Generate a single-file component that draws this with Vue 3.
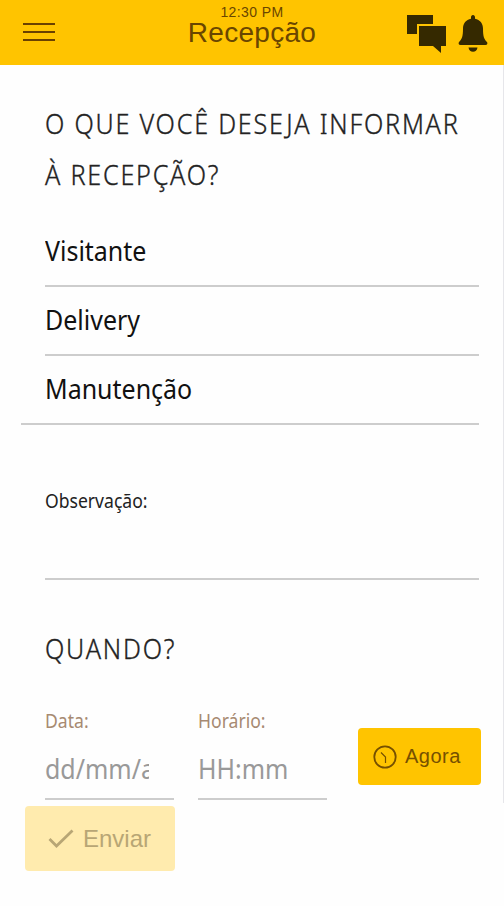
<template>
  <div class="screen">
    <header class="topbar">
      <button class="menu" aria-label="Menu">
        <span></span>
        <span></span>
        <span></span>
      </button>
      <div class="title">
        <span class="clock">12:30 PM</span>
        <h1>Recepção</h1>
      </div>
      <div class="actions">
        <svg class="chat" width="40" height="38" viewBox="0 0 40 38">
          <path d="M0 0h26v9H10v10H0z" />
          <path d="M12 11h27v20h-5v7l-8-7H12z" />
        </svg>
        <svg class="bell" width="30" height="38" viewBox="0 0 30 38">
          <path d="M15 0c1.300 0 2 1 2 2.300v1.500c5 .9 8 4.800 8 9.700 0 8 1 10.500 4 13.500.8 1 .4 3-1.500 3h-25c-1.900 0-2.300-2-1.500-3 3-3 4-5.500 4-13.500 0-4.900 3-8.800 8-9.700V2.300C13 1 13.700 0 15 0z" />
          <path d="M10.500 32.500h9c-.5 3-2.200 4.300-4.500 4.300s-4-1.300-4.500-4.300z" />
        </svg>
      </div>
    </header>

    <main class="content">
      <h2 class="question">
        <span class="fit">O QUE VOCÊ DESEJA INFORMAR</span>
        <span class="fit">À RECEPÇÃO?</span>
      </h2>

      <ul class="options">
        <li v-for="option in options" :key="option" @click="selected = option">
          <span class="fit">{{ option }}</span>
        </li>
      </ul>

      <div class="note">
        <span class="fit">Observação:</span>
      </div>

      <h2 class="when"><span class="fit">QUANDO?</span></h2>

      <div class="schedule">
        <div class="field">
          <label><span class="fit">Data:</span></label>
          <div class="value date"><span class="fit">dd/mm/aaaa</span></div>
        </div>
        <div class="field">
          <label><span class="fit">Horário:</span></label>
          <div class="value"><span class="fit">HH:mm</span></div>
        </div>
        <button class="now">
          <svg width="24" height="24" viewBox="0 0 24 24" fill="none" stroke="currentColor">
            <circle cx="12" cy="12" r="10.700" stroke-width="1.800" />
            <path d="M8 7.500l4.500 4.500v6" stroke-width="1.200" />
          </svg>
          <span>Agora</span>
        </button>
      </div>
    </main>

    <button class="send" :disabled="!selected">
      <svg width="26" height="20" viewBox="0 0 26 20" fill="none" stroke="currentColor">
        <path d="M1.500 10l7 7L24.500 1.500" stroke-width="2.800" />
      </svg>
      <span>Enviar</span>
    </button>
  </div>
</template>

<script setup>
import { ref } from 'vue'

const options = ['Visitante', 'Delivery', 'Manutenção']
const selected = ref('')
</script>

<style>
body {
  margin: 0;
  background: #fefefe;
}
</style>

<style scoped>
.screen {
  width: 504px;
  height: 906px;
  overflow: hidden;
  background: #fefefe;
  font-family: "Noto Sans", "Open Sans", sans-serif;
  color: #111;
}

h1,
h2,
ul {
  margin: 0;
  padding: 0;
  font-weight: 400;
}

button {
  border: none;
  padding: 0;
  font-family: "Liberation Sans", Arial, sans-serif;
}

.topbar {
  box-sizing: border-box;
  height: 65px;
  padding: 0 16px 0 23px;
  display: grid;
  grid-template-columns: 80px 1fr 81px;
  background: #ffc400;
  color: #6a4600;
}

.menu {
  width: 32px;
  margin-top: 23px;
  display: flex;
  flex-direction: column;
  gap: 6px;
  background: none;
}

.menu span {
  height: 2px;
  background: #6a4100;
}

.title {
  display: flex;
  flex-direction: column;
  align-items: center;
  padding-top: 5px;
  padding-right: 6px;
  font-family: "Liberation Sans", Arial, sans-serif;
}

.clock {
  font-size: 14px;
  line-height: 14px;
  letter-spacing: 0.4px;
}

.title h1 {
  font-size: 28px;
  line-height: 28px;
  letter-spacing: 0.3px;
}

.actions {
  display: flex;
  gap: 11px;
  padding-top: 15px;
  fill: #352900;
}

.actions svg {
  flex: none;
}

.content {
  box-sizing: border-box;
  height: 738px;
  padding: 33px 24px 0 45px;
  border-right: 1px solid #e6e6ea;
}

.fit {
  display: inline-block;
  white-space: nowrap;
  transform-origin: left center;
  transform: scaleX(0.925);
}

.question,
.when {
  font-size: 27px;
  line-height: 51px;
  letter-spacing: 1.9px;
  font-weight: 300;
  color: #222;
  -webkit-text-stroke: 0.35px #222;
}

.question .fit,
.when .fit {
  transform: scaleX(0.932);
}

.question {
  display: flex;
  flex-direction: column;
  align-items: flex-start;
}

.options {
  list-style: none;
  padding-top: 18px;
}

.options li {
  box-sizing: border-box;
  height: 69px;
  padding-top: 8px;
  border-bottom: 2px solid #cdcdcd;
  font-size: 27px;
  line-height: 50px;
}

.options li:last-child {
  margin-left: -24px;
  padding-left: 24px;
}

.note {
  box-sizing: border-box;
  height: 155px;
  padding-top: 61px;
  border-bottom: 2px solid #cdcdcd;
  font-size: 19px;
  line-height: 30px;
  color: #222;
}

.when {
  margin-top: 43px;
}

.schedule {
  display: flex;
  margin-top: 32px;
  margin-right: -2px;
  height: 96px;
}

.field {
  flex: none;
  width: 129px;
  margin-right: 24px;
}

.field label {
  display: block;
  font-size: 19px;
  line-height: 30px;
  color: #a78a72;
}

.value {
  box-sizing: border-box;
  height: 64px;
  padding-top: 13px;
  border-bottom: 2px solid #cdcdcd;
  font-size: 27px;
  line-height: 40px;
  color: #999;
}

.value.date {
  overflow: hidden;
  border-right: 25px solid transparent;
  border-bottom-width: 0;
  background: linear-gradient(#cdcdcd, #cdcdcd) left bottom / 100% 2px no-repeat border-box;
}

.now {
  flex: none;
  width: 123px;
  height: 57px;
  margin: 22px 0 0 7px;
  display: flex;
  align-items: center;
  gap: 8px;
  padding-left: 15px;
  border-radius: 4px;
  background: #ffc400;
  color: #765000;
  font-size: 20px;
  letter-spacing: 0.5px;
}

.send {
  width: 150px;
  height: 65px;
  margin: 3px 0 0 25px;
  display: flex;
  align-items: center;
  gap: 9px;
  padding-left: 23px;
  border-radius: 4px;
  background: #ffebae;
  color: #b8a675;
  font-size: 24px;
}
</style>
